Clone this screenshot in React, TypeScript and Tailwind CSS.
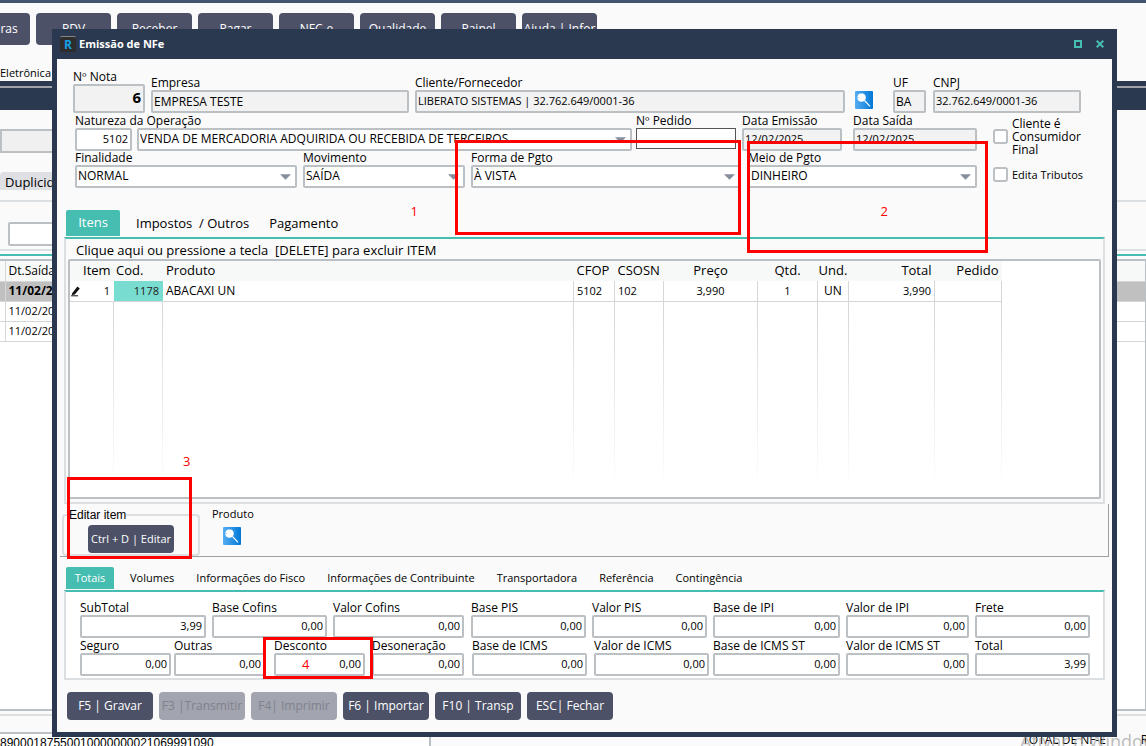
import React, { useId } from "react";
import type { ReactNode } from "react";

const inputBase =
  "block w-full min-w-0 rounded-xs border-2 border-[#bbc0c5] pr-[2px] pl-px leading-4 text-black outline-none";

function SearchIcon() {
  return (
    <svg viewBox="0 0 18 18" className="size-[18px]" aria-hidden="true">
      <defs>
        <linearGradient id="searchBlue" x1="0" x2="1" y1="0" y2="0">
          <stop offset="0" stopColor="#56adf2" />
          <stop offset="1" stopColor="#0078d7" />
        </linearGradient>
      </defs>
      <rect width="18" height="18" rx="1" fill="url(#searchBlue)" />
      <circle cx="6.5" cy="6.5" r="4.3" fill="#fff" />
      <path d="M2.5 6.5h1M6.5 1.7v1M10.5 4.5l1-1" stroke="#56adf2" strokeWidth="1" />
      <path d="M9.5 9.5l5.5 5.8" stroke="#fff" strokeWidth="1.1" />
    </svg>
  );
}

type FieldProps = {
  label: string;
  value?: string;
  className: string;
  readOnly?: boolean;
  right?: boolean;
  boxClass?: string;
  children?: ReactNode;
};

function Field({ label, value = "", className, readOnly, right, boxClass = "h-[23px]", children }: FieldProps) {
  const id = useId();
  const size = /\d/.test(value) ? "pb-[3px] text-[11px]" : "pb-px text-[12px]";
  return (
    <div className={`relative min-w-0 ${className}`}>
      <label htmlFor={id} className="block h-[14px] whitespace-nowrap text-[12px] leading-[13px]">
        {label}
      </label>
      <input
        id={id}
        defaultValue={value}
        readOnly={readOnly}
        className={`${inputBase} ${boxClass} ${size} ${readOnly ? "bg-[#f2f2f2]" : "bg-white"} ${right ? "text-right" : ""}`}
      />
      {children}
    </div>
  );
}

function Select({ label, value, className, hideLabel, children }: { label: string; value: string; className: string; hideLabel?: boolean; children?: ReactNode }) {
  const id = useId();
  return (
    <div className={`relative min-w-0 ${className}`}>
      <label htmlFor={id} className={hideLabel ? "sr-only" : "block h-[14px] whitespace-nowrap text-[12px] leading-[14px]"}>
        {label}
      </label>
      <div className="relative">
        <select id={id} className={`${inputBase} h-[23px] appearance-none bg-white pb-px text-[12px]`}>
          <option>{value}</option>
        </select>
        <svg viewBox="0 0 10 5" className="pointer-events-none absolute top-[9px] right-[6px] h-[6px] w-[11px]" aria-hidden="true">
          <path d="M0 0h10L5 5z" fill="#868d9d" />
        </svg>
      </div>
      {children}
    </div>
  );
}

function Check({ label, className }: { label: string; className: string }) {
  return (
    <label className={`flex ${className}`}>
      <input type="checkbox" className="size-[15px] shrink-0 appearance-none rounded-[3px] border-2 border-[#bbc0c5] bg-white" />
      <span>{label}</span>
    </label>
  );
}

function Mark({ className }: { className: string }) {
  return <span className={`pointer-events-none absolute z-10 border-[3px] border-[#ff0000] ${className}`} />;
}

function MarkNumber({ n, className }: { n: number; className: string }) {
  return <span className={`pointer-events-none absolute z-10 text-[13px] leading-4 text-[#ff0000] ${className}`}>{n}</span>;
}

const menu = ["Compras", "PDV", "Receber", "Pagar", "NFC-e", "Qualidade", "Painel", "Ajuda | Infor"];

function BackWindow() {
  return (
    <div className="flex min-h-screen flex-col">
      <div className="h-[3px] bg-[#42546f]" />
      <nav className="-ml-[45px] flex h-[62px] gap-[6px] pt-[10px] text-[12px] text-white">
        {menu.map((m) => (
          <button key={m} className="h-8 w-[75px] rounded bg-[#4c5167] whitespace-nowrap">
            {m}
          </button>
        ))}
      </nav>
      <div className="h-4 text-[11px] leading-4">Eletrônica</div>
      <div className="h-[29px] bg-[#2b3950] pt-[5px]">
        <div className="h-[2px] bg-[#a0a4aa]" />
      </div>
      <div className="mt-[19px] h-[24px] w-1/2 border-2 border-[#bbc0c5] bg-[#f0f0f0]" />
      <div className="mt-[19px] h-[18px] w-[70px] rounded-t bg-[#dfe0e4] pl-[5px] text-[13px] leading-[20px]">Duplicidade</div>
      <div className="mt-[10px] h-[51px] border-y-2 border-[#dcdfe2] pt-5 pl-2">
        <input aria-label="Pesquisar" className="h-6 w-[300px] rounded-xs border-2 border-[#bbc0c5] bg-white" />
      </div>
      <div className="mt-[3px] h-[2px] bg-[#45bdb0]" />
      <div className="mt-[3px] grow border-y-2 border-r border-[#bbc0c5] bg-white">
        <table className="w-full">
          <thead>
            <tr className="h-5 border-b border-[#d4d6d8] bg-[#f7f9f9] text-[12px]">
              <th className="w-[5px] border-r border-[#d4d6d8] p-0" />
              <th className="p-0 pl-[3px] text-left leading-4 font-normal">Dt.Saída</th>
            </tr>
          </thead>
          <tbody>
            {["11/02/2025", "11/02/2025", "11/02/2025"].map((d, i) => (
              <tr key={i} className={`h-5 border-b border-[#d4d6d8] ${i === 0 ? "bg-[#c0c0c0] text-[12px] font-bold" : "text-[11px]"}`}>
                <td className="border-r border-[#d4d6d8] p-0" />
                <td className="p-0 pl-[3px] leading-4">{d}</td>
              </tr>
            ))}
          </tbody>
        </table>
      </div>
      <div className="mt-[3px] h-[18px] border-t-2 border-[#dcdfe2]" />
      <div className="flex h-[14px] overflow-hidden text-[12px]">
        <div className="w-[431px] border-t-2 border-r-2 border-[#bbc0c5] bg-white font-['Liberation_Sans',sans-serif] leading-[18px]">
          89000187550010000000021069991090
        </div>
        <div className="relative grow leading-4">
          <span className="absolute top-0 right-[40px]">TOTAL DE NF-E</span>
          <span className="absolute top-0 right-[-9px]">R$</span>
          <span className="absolute -top-1 left-[589px] text-[18px] leading-[26px] whitespace-nowrap text-[#a0a0a0]/70">Ativar o Windows</span>
        </div>
      </div>
    </div>
  );
}

function Tabs({ items, small }: { items: string[]; small?: boolean }) {
  return (
    <div role="tablist" className={`flex pl-[2px] ${small ? "h-[23px] text-[11px]" : "h-[27px] text-[13px]"}`}>
      {items.map((t, i) => (
        <button
          key={t}
          role="tab"
          aria-selected={i === 0}
          className={`whitespace-pre ${
            i === 0
              ? `rounded-t-xs bg-[#45bdb0] text-white ${small ? "mr-[5px] h-[22px] w-12" : "mr-[6px] h-[26px] w-[54px]"}`
              : small
                ? "px-[11px]"
                : "px-[10px]"
          }`}
        >
          {t}
        </button>
      ))}
    </div>
  );
}

const vline = "bg-[linear-gradient(to_bottom,#d4d6d8,transparent)] bg-[length:1px_100%] bg-right bg-no-repeat";

const columns = [
  { h: "", v: "", w: "w-[13px]", a: "" },
  { h: "Item", v: "1", w: "w-[31px]", a: "text-right pr-1" },
  { h: "Cod.", v: "1178", w: "w-[49px]", a: "text-left pl-[2px]" },
  { h: "Produto", v: "ABACAXI UN", w: "", a: "text-left pl-[3px]" },
  { h: "CFOP", v: "5102", w: "w-[41px]", a: "text-left pl-[3px]" },
  { h: "CSOSN", v: "102", w: "w-[49px]", a: "text-left pl-[3px]" },
  { h: "Preço", v: "3,990", w: "w-[94px]", a: "text-center" },
  { h: "Qtd.", v: "1", w: "w-[60px]", a: "text-center" },
  { h: "Und.", v: "UN", w: "w-[31px]", a: "text-center" },
  { h: "Total", v: "3,990", w: "w-[86px]", a: "text-right pr-[3px]" },
  { h: "Pedido", v: "", w: "w-[67px]", a: "text-right pr-[3px]" },
];

function ItemsTable() {
  return (
    <div className="h-[240px] rounded-xs border-2 border-[#bbc0c5] bg-white pr-[97px]">
      <table className="w-full table-fixed border-collapse">
        <thead>
          <tr className="h-5 bg-[#f7f9f9] text-[13px]">
            {columns.map((c, i) => (
              <th key={i} className={`p-0 pb-[2px] leading-4 font-normal whitespace-nowrap ${c.w} ${c.a}`}>
                {c.h}
              </th>
            ))}
          </tr>
        </thead>
        <tbody className="text-[12px]">
          <tr className="h-5">
            {columns.map((c, i) => (
              <td
                key={i}
                className={`border-b border-[#d4d6d8] p-0 leading-[19px] whitespace-nowrap ${
                  i === 2 ? "bg-[#79dcd0] pr-[4px] text-right text-[#222]" : c.a
                } ${i > 2 ? "border-r" : ""} ${/\d/.test(c.v) ? "text-[11px]" : ""}`}
              >
                {i === 0 ? (
                  <svg viewBox="0 0 12 12" className="size-3" aria-hidden="true">
                    <path d="M2 8.5 7.4 1.6 9.8 3.4 4.8 9.6 2 10z" fill="#111" />
                    <path d="M1 10.8h7" stroke="#111" />
                  </svg>
                ) : (
                  c.v
                )}
              </td>
            ))}
          </tr>
          <tr className="h-[190px]" aria-hidden="true">
            {columns.map((_, i) => (
              <td key={i} className={`p-0 ${i > 1 ? vline : i === 1 ? vline : ""}`} />
            ))}
          </tr>
        </tbody>
      </table>
    </div>
  );
}

const actions = [
  { t: "F5 | Gravar" },
  { t: "F3 |Transmitir", off: true },
  { t: "F4| Imprimir", off: true },
  { t: "F6 | Importar" },
  { t: "F10 | Transp" },
  { t: "ESC| Fechar" },
];

export default function App() {
  return (
    <div className="relative min-h-screen overflow-hidden bg-[#fafafa] font-['Open_Sans','Noto_Sans',sans-serif] text-black">
      <BackWindow />
      <main className="absolute top-[29px] right-[29px] left-[52px] border-x-[5px] border-b-[5px] border-[#2b3950] bg-[#fafafa]">
        <header className="flex h-[30px] items-center bg-[#2b3950] pr-[7px] pl-[3px]">
          <span className="flex size-4 items-center justify-center rounded-xs border-t border-[#888] bg-[#2d2d2d] text-[12px] font-bold text-[#18a0e8]">R</span>
          <h1 className="ml-[3px] grow text-[11px] font-bold text-white">Emissão de NFe</h1>
          <button aria-label="Maximizar" className="mr-[14px]">
            <svg viewBox="0 0 8 8" className="size-2">
              <path d="M1 1h6v6H1z" fill="none" stroke="#45bdb0" strokeWidth="2" />
            </svg>
          </button>
          <button aria-label="Fechar" className="mr-[1px]">
            <svg viewBox="0 0 8 8" className="size-2">
              <path d="M.7.7l6.6 6.6M7.3.7L.7 7.3" stroke="#45bdb0" strokeWidth="2" />
            </svg>
          </button>
        </header>

        <section className="pt-[11px]">
          <div className="flex items-end pr-[31px] pl-4">
            <Field label="Nº Nota" value="6" right readOnly className="w-[72px]" boxClass="h-[29px] text-[15px]! font-bold" />
            <Field label="Empresa" value="EMPRESA TESTE" readOnly className="ml-[6px] flex-[258]" />
            <Field label="Cliente/Fornecedor" value="LIBERATO SISTEMAS | 32.762.649/0001-36" readOnly className="ml-[6px] flex-[430]" />
            <button aria-label="Buscar cliente" className="mb-[4px] ml-[10px]">
              <SearchIcon />
            </button>
            <Field label="UF" value="BA" readOnly className="ml-5 w-[33px]" />
            <Field label="CNPJ" value="32.762.649/0001-36" readOnly className="ml-[7px] w-[148px]" />
          </div>
          <div className="mt-px flex items-end pr-4 pl-[18px]">
            <Field label="Natureza da Operação" value="5102" right className="w-[57px]" />
            <Select label="Descrição da natureza" hideLabel value="VENDA DE MERCADORIA ADQUIRIDA OU RECEBIDA DE TERCEIROS" className="ml-[5px] flex-1" />
            <Field label="Nº Pedido" className="ml-1 w-[100px]" boxClass="h-[21px] mb-[2px] border! border-[#555]! rounded-none!" />
            <Field label="Data Emissão" value="12/02/2025" readOnly className="ml-[6px] w-[100px]" />
            <Field label="Data Saída" value="12/02/2025" readOnly className="ml-[11px] w-[124px]" />
            <Check label="Cliente é Consumidor Final" className="-mb-[4px] ml-4 h-[38px] w-[103px] items-center gap-1 text-[12px] leading-[13px]" />
          </div>
          <div className="flex items-end pr-4 pl-[18px]">
            <Select label="Finalidade" value="NORMAL" className="flex-[222]" />
            <Select label="Movimento" value="SAÍDA" className="ml-[6px] flex-[162]">
              <MarkNumber n={1} className="right-[47px] bottom-[-31px]" />
            </Select>
            <Select label="Forma de Pgto" value="À VISTA" className="ml-[6px] flex-[270]">
              <Mark className="top-[-11px] -left-4 h-[95px] right-0" />
            </Select>
            <Select label="Meio de Pgto" value="DINHEIRO" className="ml-[7px] flex-[229]">
              <Mark className="top-[-10px] right-[-11px] h-[112px] left-[-1px]" />
              <MarkNumber n={2} className="right-[89px] bottom-[-31px]" />
            </Select>
            <Check label="Edita Tributos" className="mb-[6px] ml-4 w-[103px] items-center gap-1 text-[11px] leading-[15px] whitespace-nowrap" />
          </div>
        </section>

        <section className="mt-[22px] pr-[7px] pl-[7px]">
          <Tabs items={["Itens", "Impostos  / Outros", "Pagamento"]} />
          <div className="border-x-2 border-t-2 border-b-2 border-[#dcdfe2] border-t-[#45bdb0] px-[2px] pb-[3px]">
            <p className="h-5 pl-2 text-[13px] leading-[22px] whitespace-pre">Clique aqui ou pressione a tecla  [DELETE] para excluir ITEM</p>
            <ItemsTable />
          </div>
        </section>

        <section className="mr-[3px] ml-[3px] flex h-[53px] border-r border-b border-[#a0a0a0]">
          <div className="relative w-[140px] pt-[4px] pl-[2px]">
            <fieldset className="h-[48px] rounded border-2 border-[#dcdfe2] pl-[24px]">
              <legend className="-ml-[19px] h-[14px] font-['Liberation_Sans',sans-serif] text-[12px] leading-[14px]">Editar item</legend>
              <button className="mt-[3px] block h-7 w-[86px] rounded bg-[#4c5167] text-[11px] whitespace-nowrap text-white">Ctrl + D | Editar</button>
            </fieldset>
            <Mark className="top-[-27px] left-[7px] h-[82px] w-[125px]" />
            <MarkNumber n={3} className="top-[-51px] left-[123px]" />
          </div>
          <div className="pt-[2px] pl-3 text-[11px]">
            <div className="leading-4">Produto</div>
            <button aria-label="Buscar produto" className="mt-[5px] ml-[11px] block">
              <SearchIcon />
            </button>
          </div>
        </section>

        <section className="mt-[10px] px-[7px]">
          <Tabs
            small
            items={["Totais", "Volumes", "Informações do Fisco", "Informações de Contribuinte", "Transportadora", "Referência", "Contingência"]}
          />
          <div className="border-x-2 border-t-2 border-b-2 border-[#dcdfe2] border-t-[#45bdb0] bg-white pt-[9px] pr-[13px] pb-[2px] pl-[14px]">
            <div className="flex">
              <Field label="SubTotal" value="3,99" right className="flex-[126]" />
              <Field label="Base Cofins" value="0,00" right className="ml-[6px] flex-[115]" />
              <Field label="Valor Cofins" value="0,00" right className="ml-[6px] flex-[131]" />
              <Field label="Base PIS" value="0,00" right className="ml-[7px] flex-[115]" />
              <Field label="Valor PIS" value="0,00" right className="ml-[6px] flex-[115]" />
              <Field label="Base de IPI" value="0,00" right className="ml-[6px] flex-[127]" />
              <Field label="Valor de IPI" value="0,00" right className="ml-[6px] flex-[123]" />
              <Field label="Frete" value="0,00" right className="ml-[6px] flex-[115]" />
            </div>
            <div className="mt-px flex">
              <Field label="Seguro" value="0,00" right className="flex-[91]" />
              <Field label="Outras" value="0,00" right className="ml-[3px] flex-[91]" />
              <Field label="Desconto" value="0,00" right className="ml-[9px] flex-[91]">
                <Mark className="top-[-2px] right-[-8px] left-[-11px] z-20 h-[42px]" />
                <MarkNumber n={4} className="top-[17px] left-[28px]" />
              </Field>
              <Field label="Desoneração" value="0,00" right className="ml-[7px] flex-[92]" />
              <Field label="Base de ICMS" value="0,00" right className="ml-2 flex-[115]" />
              <Field label="Valor de ICMS" value="0,00" right className="ml-[7px] flex-[115]" />
              <Field label="Base de ICMS ST" value="0,00" right className="ml-1 flex-[127]" />
              <Field label="Valor de ICMS ST" value="0,00" right className="ml-[6px] flex-[123]" />
              <Field label="Total" value="3,99" right className="ml-[6px] flex-[115]" />
            </div>
          </div>
        </section>

        <footer className="flex gap-[6px] px-[10px] py-3 text-[12px]">
          {actions.map((a) => (
            <button
              key={a.t}
              disabled={a.off}
              className={`h-7 w-[86px] rounded whitespace-nowrap ${a.off ? "bg-[#a2a4af] text-[#80828c]" : "bg-[#4c5167] text-white"}`}
            >
              {a.t}
            </button>
          ))}
        </footer>
      </main>
    </div>
  );
}
